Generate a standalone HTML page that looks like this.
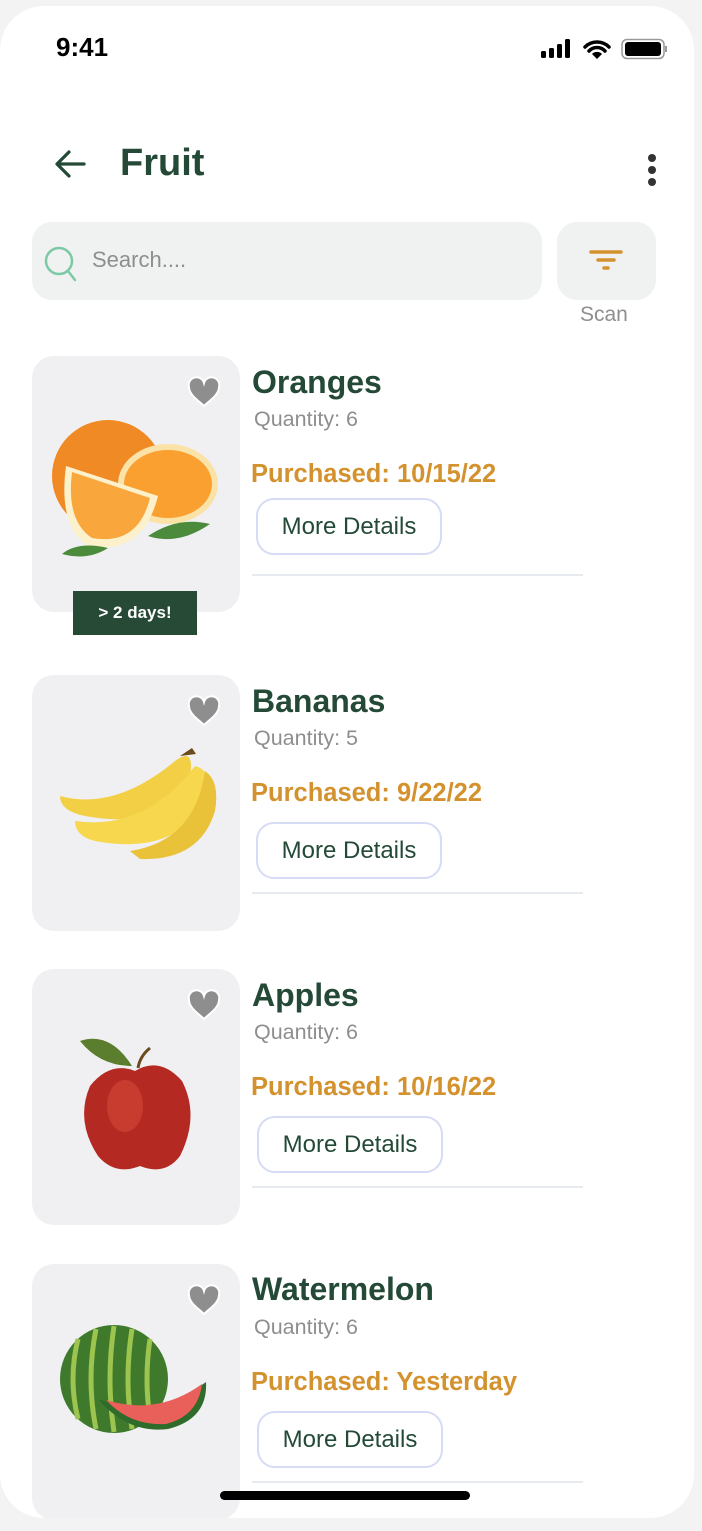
<!DOCTYPE html>
<html><head><meta charset="utf-8"><style>
*{margin:0;padding:0;box-sizing:border-box}
body{width:702px;height:1531px;background:#f3f3f3;font-family:"Liberation Sans",sans-serif;position:relative;overflow:hidden}
.phone{position:absolute;left:0;top:6px;width:694px;height:1512px;background:#fff;border-radius:44px;overflow:hidden}
.abs{position:absolute}
.card{position:absolute;left:32px;width:208px;height:256px;background:#f0f0f2;border-radius:22px}
.title{position:absolute;left:252px;font-size:32px;font-weight:bold;color:#244a37}
.qty{position:absolute;left:254px;font-size:21.5px;color:#8e8e8e}
.pur{position:absolute;left:251px;font-size:25.5px;font-weight:bold;color:#d4922e}
.btn{position:absolute;width:186px;height:57px;border:2px solid #d6dbf6;border-radius:18px;font-size:24px;color:#244a37;text-align:center;line-height:53px;background:#fff}
.div{position:absolute;left:252px;width:331px;height:2px;background:#e7eaef}
.heart{position:absolute;width:34px;height:32px}
</style></head><body>
<div class="phone">
<div class="abs" style="left:56px;top:26px;font-size:26px;font-weight:bold;color:#000">9:41</div>
<svg class="abs" style="left:540px;top:32px" width="128" height="24" viewBox="0 0 128 24">
<rect x="1" y="13" width="5" height="7" rx="1.5"/><rect x="9" y="10" width="5" height="10" rx="1.5"/><rect x="17" y="6" width="5" height="14" rx="1.5"/><rect x="25" y="1" width="5" height="19" rx="1.5"/>
<path d="M45 9a17 17 0 0 1 24 0M49 13a11 11 0 0 1 16 0" stroke="#000" stroke-width="3.5" fill="none" stroke-linecap="round"/><path d="M52 16l5 5 5-5a7 7 0 0 0-10 0z"/>
<rect x="82" y="1.5" width="42" height="19" rx="5" fill="none" stroke="#999" stroke-width="1.5"/><rect x="85" y="4" width="36" height="14" rx="3"/><rect x="125" y="8" width="2" height="6" fill="#999"/>
</svg>
<svg class="abs" style="left:52px;top:140px" width="36" height="36" viewBox="0 0 36 36"><path d="M32 18H6M17 6L5 18l12 12" stroke="#244a37" stroke-width="3.2" fill="none" stroke-linecap="round" stroke-linejoin="round"/></svg>
<div class="abs" style="left:120px;top:136px;font-size:38px;font-weight:bold;color:#244a37">Fruit</div>
<div class="abs" style="left:648px;top:148px;width:8px;height:8px;border-radius:50%;background:#333"></div>
<div class="abs" style="left:648px;top:160px;width:8px;height:8px;border-radius:50%;background:#333"></div>
<div class="abs" style="left:648px;top:172px;width:8px;height:8px;border-radius:50%;background:#333"></div>
<div class="abs" style="left:32px;top:216px;width:510px;height:78px;background:#f0f2f1;border-radius:20px"></div>
<svg class="abs" style="left:42px;top:238px" width="40" height="40" viewBox="0 0 40 40"><circle cx="17" cy="17" r="13" stroke="#7dc9a6" stroke-width="2.5" fill="none"/><path d="M26 27l7 9" stroke="#7dc9a6" stroke-width="2.5" stroke-linecap="round"/></svg>
<div class="abs" style="left:92px;top:241px;font-size:22px;color:#8e8e8e">Search....</div>
<div class="abs" style="left:557px;top:216px;width:99px;height:78px;background:#f0f2f1;border-radius:20px"></div>
<svg class="abs" style="left:588px;top:242px" width="38" height="30" viewBox="0 0 38 30"><path d="M3 4h30M10 12h16M16 20h4" stroke="#d4922e" stroke-width="3.5" stroke-linecap="round"/></svg>
<div class="abs" style="left:580px;top:297px;font-size:21px;color:#8e8e8e">Scan</div>

<!-- card 1 -->
<div class="card" style="top:350px"></div>
<svg class="abs" style="left:48px;top:400px" width="170" height="160" viewBox="0 0 170 160">
<circle cx="60" cy="70" r="56" fill="#f08a24"/><ellipse cx="120" cy="78" rx="50" ry="40" fill="#fbe3a8"/><ellipse cx="120" cy="78" rx="44" ry="34" fill="#f9a030"/>
<path d="M18 60 L110 90 Q95 150 40 140 Q10 120 18 60z" fill="#fdf1cc"/><path d="M24 66 L102 92 Q90 140 44 132 Q18 115 24 66z" fill="#f9a63c"/>
<path d="M100 130 Q130 110 162 118 Q130 140 100 130z" fill="#4c8b3b"/><path d="M14 148 Q30 135 60 142 Q40 155 14 148z" fill="#4c8b3b"/>
</svg>
<svg class="heart" style="left:187px;top:370px" viewBox="0 0 34 32"><path d="M17 30C12 25 2 19 2 11A7.5 7.5 0 0 1 17 7A7.5 7.5 0 0 1 32 11C32 19 22 25 17 30z" fill="#8e8e8e" stroke="#fff" stroke-width="2"/></svg>
<div class="abs" style="left:73px;top:585px;width:124px;height:44px;background:#264a36;color:#fff;font-weight:bold;font-size:17px;text-align:center;line-height:44px">&gt; 2 days!</div>
<div class="title" style="top:358px">Oranges</div>
<div class="qty" style="top:401px">Quantity: 6</div>
<div class="pur" style="top:454px">Purchased: 10/15/22</div>
<div class="btn" style="left:256px;top:492px">More Details</div>
<div class="div" style="top:568px"></div>

<!-- card 2 -->
<div class="card" style="top:669px"></div>
<svg class="abs" style="left:55px;top:735px" width="165" height="120" viewBox="0 0 165 120">
<path d="M5 55 Q60 70 120 20 Q140 5 135 35 Q110 90 30 75 Q5 70 5 55z" fill="#f2cf45"/>
<path d="M20 80 Q90 90 140 25 Q160 30 150 60 Q120 115 40 100 Q20 95 20 80z" fill="#f6d74e"/>
<path d="M75 110 Q140 100 150 30 Q165 40 160 70 Q145 120 85 118z" fill="#e9c23a"/>
<path d="M125 15 l12 -8 4 6z" fill="#6b4a1c"/>
</svg>
<svg class="heart" style="left:187px;top:689px" viewBox="0 0 34 32"><path d="M17 30C12 25 2 19 2 11A7.5 7.5 0 0 1 17 7A7.5 7.5 0 0 1 32 11C32 19 22 25 17 30z" fill="#8e8e8e" stroke="#fff" stroke-width="2"/></svg>
<div class="title" style="top:677px">Bananas</div>
<div class="qty" style="top:720px">Quantity: 5</div>
<div class="pur" style="top:773px">Purchased: 9/22/22</div>
<div class="btn" style="left:256px;top:816px">More Details</div>
<div class="div" style="top:886px"></div>

<!-- card 3 -->
<div class="card" style="top:963px"></div>
<svg class="abs" style="left:70px;top:1020px" width="130" height="150" viewBox="0 0 130 150">
<path d="M10 15 Q40 5 62 40 Q30 40 10 15z" fill="#5b7d2e"/>
<path d="M68 42 Q70 30 80 22" stroke="#6b4a1c" stroke-width="3" fill="none"/>
<path d="M65 45 Q90 30 112 55 Q130 90 110 130 Q95 150 70 140 Q45 150 28 130 Q5 95 20 60 Q40 35 65 45z" fill="#b42a22"/>
<ellipse cx="55" cy="80" rx="18" ry="26" fill="#d64a3a" opacity=".6"/>
</svg>
<svg class="heart" style="left:187px;top:983px" viewBox="0 0 34 32"><path d="M17 30C12 25 2 19 2 11A7.5 7.5 0 0 1 17 7A7.5 7.5 0 0 1 32 11C32 19 22 25 17 30z" fill="#8e8e8e" stroke="#fff" stroke-width="2"/></svg>
<div class="title" style="top:971px">Apples</div>
<div class="qty" style="top:1014px">Quantity: 6</div>
<div class="pur" style="top:1067px">Purchased: 10/16/22</div>
<div class="btn" style="left:257px;top:1110px">More Details</div>
<div class="div" style="top:1180px"></div>

<!-- card 4 -->
<div class="card" style="top:1258px"></div>
<svg class="abs" style="left:58px;top:1318px" width="152" height="110" viewBox="0 0 152 110">
<circle cx="56" cy="55" r="54" fill="#3f7a2c"/>
<path d="M20 15 Q10 55 20 95M38 5 Q28 55 38 105M56 2 Q48 55 56 108M74 5 Q66 55 74 105M92 15 Q86 55 92 95" stroke="#9cc44e" stroke-width="5" fill="none"/>
<path d="M40 75 Q100 95 148 58 Q150 95 110 105 Q70 110 40 75z" fill="#2f6b2a"/>
<path d="M48 76 Q100 92 144 60 Q140 92 108 100 Q72 102 48 76z" fill="#e9605a"/>
</svg>
<svg class="heart" style="left:187px;top:1278px" viewBox="0 0 34 32"><path d="M17 30C12 25 2 19 2 11A7.5 7.5 0 0 1 17 7A7.5 7.5 0 0 1 32 11C32 19 22 25 17 30z" fill="#8e8e8e" stroke="#fff" stroke-width="2"/></svg>
<div class="title" style="top:1265px">Watermelon</div>
<div class="qty" style="top:1309px">Quantity: 6</div>
<div class="pur" style="top:1362px">Purchased: Yesterday</div>
<div class="btn" style="left:257px;top:1405px">More Details</div>
<div class="div" style="top:1475px"></div>

<div class="abs" style="left:220px;top:1485px;width:250px;height:9px;border-radius:5px;background:#000"></div>
</div>
</body></html>
